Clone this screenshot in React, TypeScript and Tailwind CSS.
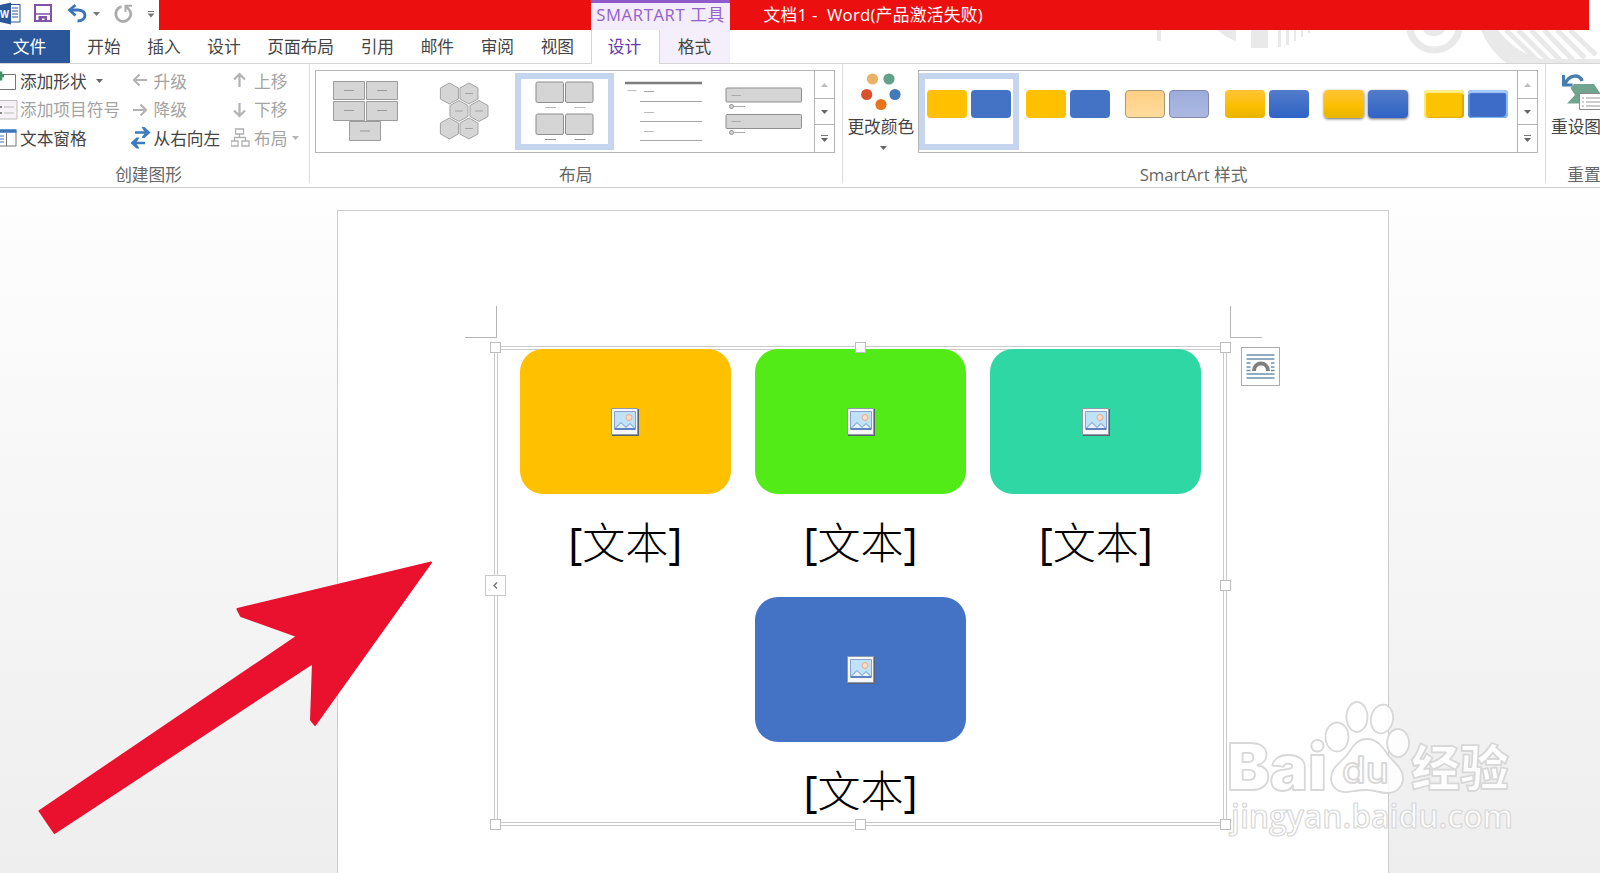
import type { ReactNode } from 'react';

const tabs = ['开始', '插入', '设计', '页面布局', '引用', '邮件', '审阅', '视图'];

function Caret({ className = 'text-[#666]' }: { className?: string }) {
  return (
    <svg width="7" height="4" viewBox="0 0 7 4" className={className}>
      <path d="M0 0h7L3.500 4z" fill="currentColor" />
    </svg>
  );
}

function QuickAccess() {
  return (
    <svg width="159" height="30" viewBox="0 0 159 30" className="shrink-0">
      <rect x="8" y="4.500" width="12" height="17.500" fill="#fff" stroke="#2b579a" />
      <path d="M12 8h6M12 11h6M12 14h6M12 17h6" stroke="#2b579a" />
      <path d="M0 5l11-2.500v22L0 22z" fill="#2b579a" />
      <text x="0" y="18" fontSize="11" fontWeight="700" fill="#fff" fontFamily="Open Sans" textLength="9" lengthAdjust="spacingAndGlyphs">W</text>
      <path d="M35 5h16v16h-16z" fill="#fff" stroke="#8151ac" strokeWidth="2" />
      <path d="M35 14h16" stroke="#8151ac" strokeWidth="1.500" />
      <path d="M38.500 16h8.500v5.500h-2.500v-3h-2.500v3h-3.500z" fill="#8151ac" />
      <path d="M70 10h8.500c9 .5 8.500 11-1 11" fill="none" stroke="#3b74b9" strokeWidth="3" />
      <path d="M75.500 5l-6 5 6 5.500" fill="none" stroke="#3b74b9" strokeWidth="2.800" />
      <path d="M93 12h7l-3.500 4z" fill="#777" />
      <path d="M121.500 6.600a7.500 7.500 0 1 0 8.500 4" fill="none" stroke="#acacac" strokeWidth="2.800" />
      <path d="M125.500 12V5.800h6.500" fill="none" stroke="#acacac" strokeWidth="2" />
      <path d="M126 6l4 5" stroke="#acacac" strokeWidth="2.500" />
      <path d="M148 11.500h6" stroke="#777" />
      <path d="M147.500 13.500h7l-3.500 4z" fill="#777" />
    </svg>
  );
}

function TitleBar() {
  return (
    <div className="flex h-[30px] w-full">
      <QuickAccess />
      <div className="w-[432px] bg-[#eb0f0f]" />
      <div className="w-[139px] border-t-[3px] border-[#8f5bcb] bg-[#f3ecfb] text-center leading-[24px] tracking-[0.600px] whitespace-nowrap text-[#9461c9]">
        SMARTART 工具
      </div>
      <div className="w-[859px] bg-[#eb0f0f] pl-[33.500px] leading-[30px] tracking-[0.300px] whitespace-pre text-white">
        {'文档1 -  Word(产品激活失败)'}
      </div>
    </div>
  );
}

function TabBar() {
  return (
    <div className="relative flex h-[34px] border-b border-[#d5d5d5] leading-[33px] text-[#444]">
      <svg className="absolute top-0 left-[1150px]" width="450" height="33" viewBox="0 0 450 33">
        <g fill="#e9e9e9">
          <path d="M7 0h4v11H7zM68 0h18v11Q74 7 68 0zM101 0h17v18h-17zM128 0h3v17h-3zM136 0h3v15h-3zM144 0h2v11h-2zM151 0h2v7h-2zM158 0h2v3h-2z" />
          <path d="M273 0h22q-3 6-11 6T273 0z" />
          <path d="M331 0h17q20 25 44 29l58 0v4H356Q339 20 331 0z" />
        </g>
        <path d="M260 0a25 25 0 0 0 49 0" fill="none" stroke="#e9e9e9" strokeWidth="7" />
        <path d="M356 0l32 31M368 0l31 31M381 0l30 31M394 0l29 30M407 0l28 28M420 0l26 25" stroke="#e9e9e9" strokeWidth="5" />
      </svg>
      <div className="w-[70px] bg-[#2b579a] pr-[11px] text-center leading-[33px] text-white">文件</div>
      <div className="flex w-[520.500px] shrink-0 pl-[4px]">
        {tabs.map((tab) => (
          <div key={tab} className="shrink-0 px-[13.320px]">{tab}</div>
        ))}
      </div>
      <div className="relative z-10 h-[34px] w-[69px] shrink-0 border-x border-[#d5d5d5] bg-white pr-[1px] text-center text-[#6a35b0]">
        设计
      </div>
      <div className="w-[70px] bg-[#f5effc] text-center">格式</div>
    </div>
  );
}

function Group({ label, className, children }: { label: string; className: string; children: ReactNode }) {
  return (
    <div className={`flex shrink-0 flex-col ${className}`}>
      <div className="h-[98px] shrink-0">{children}</div>
      <div className="text-center leading-[25px] whitespace-nowrap text-[#666]">{label}</div>
    </div>
  );
}

function Command({ icon, label, muted, caret }: { icon: ReactNode; label: string; muted?: boolean; caret?: boolean }) {
  return (
    <div className={muted ? 'flex h-[28.500px] items-center text-[#a3a3a3]' : 'flex h-[28.500px] items-center text-[#444]'}>
      {icon}
      <span className="whitespace-nowrap">{label}</span>
      {caret && <Caret className={muted ? 'ml-[5px] text-[#b5b5b5]' : 'ml-[9px] text-[#666]'} />}
    </div>
  );
}

function Arrow({ d }: { d: string }) {
  return (
    <svg width="23" height="22" viewBox="0 0 23 22" className="shrink-0">
      <path d={d} fill="none" stroke="#b3b3b3" strokeWidth="2.200" />
    </svg>
  );
}

function CreateGraphic() {
  return (
    <div className="flex pt-[3px]">
      <div className="w-[130.500px] shrink-0">
        <Command
          label="添加形状"
          caret
          icon={
            <svg width="20" height="24" viewBox="0 0 20 24" className="shrink-0">
              <path d="M-1 5.500h16.500v15H-1" fill="#fff" stroke="#777" />
              <path d="M-3 7h7M1 2.500v9" stroke="#3f9268" strokeWidth="2.500" />
            </svg>
          }
        />
        <Command
          label="添加项目符号"
          muted
          icon={
            <svg width="20" height="24" viewBox="0 0 20 24" className="shrink-0">
              <path d="M-1 2.500h18v18.500H-1" fill="#f6f1f6" stroke="#bbb" />
              <path d="M0 9h2M0 15h2" stroke="#888" strokeWidth="2" />
              <path d="M4 9h10M4 15h10" stroke="#bbb" />
            </svg>
          }
        />
        <Command
          label="文本窗格"
          icon={
            <svg width="20" height="24" viewBox="0 0 20 24" className="shrink-0">
              <path d="M-1 4.500h17v15.500H-1z" fill="#fff" stroke="#777" />
              <path d="M0 5h16.500" stroke="#3b74b9" strokeWidth="3.500" />
              <path d="M6.500 7v13" stroke="#777" />
              <path d="M0 10h4M0 13h4M0 16h4" stroke="#3b74b9" />
            </svg>
          }
        />
      </div>
      <div className="w-[100.500px] shrink-0">
        <Command muted label="升级" icon={<Arrow d="M16 10H3M8.500 4.500L3 10l5.500 5.500" />} />
        <Command muted label="降级" icon={<Arrow d="M2 11h13M9.500 5.500L15 11l-5.500 5.500" />} />
        <Command
          label="从右向左"
          icon={
            <svg width="23" height="24" viewBox="0 0 23 24" className="shrink-0">
              <path d="M4 6.500h11M2 17h12" fill="none" stroke="#3b7bbf" strokeWidth="2.600" />
              <path d="M10.500 1h3l6 5.500-6 5.500h-3l3.500-5.500zM8.500 11.500h-3l-6 5.500 6 5.500h3L5 17z" fill="#3b7bbf" />
            </svg>
          }
        />
      </div>
      <div className="shrink-0">
        <Command muted label="上移" icon={<Arrow d="M8.500 17V4M3 9.500L8.500 4l5.500 5.500" />} />
        <Command muted label="下移" icon={<Arrow d="M8.500 4v13M3 11.500L8.500 17l5.500-5.500" />} />
        <Command
          muted
          caret
          label="布局"
          icon={
            <svg width="23" height="22" viewBox="0 0 23 22" className="shrink-0">
              <path d="M4.500 2h8v5h-8zM0 14h7v5H0zM11 14h7v5h-7zM8.500 7v4M3.500 14v-3.500h11V14" fill="none" stroke="#b0b0b0" strokeWidth="1.300" />
            </svg>
          }
        />
      </div>
    </div>
  );
}

function GalleryScroll() {
  return (
    <div className="flex w-[20px] shrink-0 flex-col border-l border-[#b5b5b5]">
      <div className="flex h-[28px] items-center justify-center border-b border-[#b5b5b5]">
        <Caret className="rotate-180 text-[#bdbdbd]" />
      </div>
      <div className="flex h-[26px] items-center justify-center border-b border-[#b5b5b5]">
        <Caret />
      </div>
      <div className="flex flex-1 flex-col items-center justify-center gap-[2px]">
        <div className="h-px w-[7px] bg-[#777]" />
        <Caret />
      </div>
    </div>
  );
}

const hexes = [[34.4, 22.5], [54, 22.5], [44, 40], [64, 40], [34.4, 57.5], [54, 57.5]];

const layouts = [
  <g fill="#d5d5d5" stroke="#9b9b9b">
    <path d="M17.500 10.500h31v18h-31zM50.500 10.500h31v18h-31zM17.500 30.500h31v19h-31zM50.500 30.500h31v19h-31zM33.500 50.500h31v19h-31z" />
    <path d="M28 19.500h10M61 19.500h10M28 39.500h10M61 39.500h10M44 60h10" />
  </g>,
  <g fill="#d5d5d5" stroke="#a3a3a3">
    {hexes.map(([x, y]) => (
      <path key={`${x}-${y}`} transform={`translate(${x} ${y})`} d="M0-10.500l9 5v11l-9 5-9-5v-11z" />
    ))}
    <path d="M50 22.500h8M40 40h8M60 40h8M50 57.500h8" />
  </g>,
  <g fill="#d5d5d5" stroke="#8e8e8e">
    <rect x="21" y="11" width="27.500" height="20.500" rx="1.500" />
    <rect x="50.500" y="11" width="27.500" height="20.500" rx="1.500" />
    <rect x="21" y="43" width="27.500" height="20.500" rx="1.500" />
    <rect x="50.500" y="43" width="27.500" height="20.500" rx="1.500" />
    <path d="M30 36.500h11M59.500 36.500h11" stroke="#bbb" />
    <path d="M30 68.500h11M59.500 68.500h11" />
  </g>,
  <g stroke="#a6a6a6">
    <path d="M11 12h77" stroke="#7d7d7d" strokeWidth="2.500" />
    <path d="M30 20.500h10M26 30.500h62M26 50.500h62M26 69.500h62" />
    <path d="M13.500 19.500h9M30 41.500h10M30 60.500h10" stroke="#bbb" />
  </g>,
  <g fill="#d5d5d5" stroke="#8e8e8e">
    <rect x="12" y="17" width="75.500" height="14" rx="1" />
    <rect x="12" y="43.500" width="75.500" height="14" rx="1" />
    <path d="M17.500 24.500h9.500M17.500 50.500h9.500M20 35.500h11M20 61.500h11" stroke="#aaa" />
    <circle cx="17.500" cy="35.500" r="2" />
    <circle cx="17.500" cy="61.500" r="2" />
  </g>,
];

function LayoutGallery() {
  return (
    <div className="flex pt-[6px] pl-[4.500px]">
      <div className="flex h-[83px] w-[520px] border border-[#b5b5b5]">
        {layouts.map((drawing, i) => (
          <div key={i} className="relative h-[80px] w-[99.600px] shrink-0">
            {i === 2 && <div className="absolute inset-x-0 top-[1.500px] h-[77px] border-[6px] border-[#c5d5ee]" />}
            <svg width="99.600" height="80" viewBox="0 0 99.600 80" className="relative">{drawing}</svg>
          </div>
        ))}
        <div className="flex-1" />
        <GalleryScroll />
      </div>
    </div>
  );
}

const styles = [
  ['bg-[#ffc000]', 'bg-[#4472c4]'],
  ['bg-[#ffc000]', 'bg-[#4472c4]'],
  ['border border-[#a3987c] bg-linear-to-b from-[#ffcf83] to-[#ffdc9c]', 'border border-[#8088ad] bg-linear-to-b from-[#9bacdb] to-[#adb8e2]'],
  ['bg-linear-to-b from-[#ffc332] via-[#fcc000] to-[#e9b500]', 'bg-linear-to-b from-[#537bc9] to-[#2f63c6]'],
  ['bg-linear-to-b from-[#ffc332] via-[#fcc000] to-[#e9b500] shadow-[0_1px_3px_#666]', 'bg-linear-to-b from-[#537bc9] to-[#2f63c6] shadow-[0_1px_3px_#666]'],
  ['bg-[#fcc400] shadow-[inset_0_4px_1px_-1px_#fff08a,inset_2px_0_1px_#ffe97a,inset_-2px_-1px_1px_#d8a900]', 'bg-[#3d6cc8] shadow-[inset_0_4px_1px_-1px_#a8cafa,inset_2px_0_1px_#5b8fe0,inset_-2px_-1px_1px_#8cc0f5]'],
];

function StyleGallery() {
  return (
    <div className="mt-[6px] flex h-[83px] w-[620px] border border-[#b5b5b5]">
      {styles.map(([left, right], i) => (
        <div key={i} className="relative h-[80px] w-[99.400px] shrink-0 pt-[19px]">
          {i === 0 && <div className="absolute top-[1.500px] right-[-1px] left-0 h-[77px] border-[6px] border-[#c5d5ee]" />}
          <div className="relative flex justify-center gap-[4px]">
            <div className={`h-[28px] w-[40px] rounded-[4px] ${left}`} />
            <div className={`h-[28px] w-[40px] rounded-[4px] ${right}`} />
          </div>
        </div>
      ))}
      <div className="flex-1" />
      <GalleryScroll />
    </div>
  );
}

function Ribbon() {
  return (
    <div className="flex h-[124px] overflow-hidden border-b border-[#cfcfcf] bg-white pb-[4px]">
      <Group label="创建图形" className="w-[310px] border-r border-[#dcdcdc] pr-[12px]">
        <CreateGraphic />
      </Group>
      <Group label="布局" className="w-[532.500px] border-r border-[#dcdcdc]">
        <LayoutGallery />
      </Group>
      <Group label="SmartArt 样式" className="w-[703px] border-r border-[#dcdcdc]">
        <div className="flex">
          <div className="flex w-[75.500px] shrink-0 flex-col items-center text-[#444]">
            <svg width="60" height="50" viewBox="0 0 60 50" className="shrink-0">
              <circle cx="22.500" cy="15" r="5.600" fill="#ecb164" />
              <circle cx="39" cy="15" r="5.600" fill="#63a18a" />
              <circle cx="16.700" cy="30.500" r="5.600" fill="#d9512f" />
              <circle cx="45" cy="30.500" r="5.600" fill="#437ab8" />
              <circle cx="31" cy="40.500" r="5.600" fill="#e5741d" />
            </svg>
            <div className="pl-px leading-[26px] whitespace-nowrap">更改颜色</div>
            <Caret className="mt-[6px] ml-[6px] text-[#666]" />
          </div>
          <StyleGallery />
        </div>
      </Group>
      <Group label="重置" className="w-[77px]">
        <div className="pl-[5.500px] text-[#444]">
          <svg width="60" height="50" viewBox="0 0 60 50">
            <path d="M23 20h20l6 9v10.500H16l8-8.500-4.500-7z" fill="#70a48f" />
            <path d="M28.500 29.500h25v16h-25z" fill="#fff" stroke="#888" />
            <path d="M31 34h2M31 38h2M31 42h2M35 34h15M35 38h15M35 42h15" stroke="#999" />
            <path d="M14 20c4-10 15-10 17-3" fill="none" stroke="#477ead" strokeWidth="3.500" />
            <path d="M12.500 11v10h9" fill="none" stroke="#477ead" strokeWidth="3" />
          </svg>
          <div className="leading-[26px] whitespace-nowrap">重设图形</div>
        </div>
      </Group>
    </div>
  );
}

function PictureIcon() {
  return (
    <svg width="28" height="28" viewBox="0 0 28 28">
      <path d="M1 1h27v27H1z" fill="#5c6270" />
      <path d="M.5 .5h26v26H.5z" fill="#f7f8fb" stroke="#9099a8" />
      <path d="M3.500 3.500h21v18h-21z" fill="#bfe2f8" stroke="#8ba1cb" />
      <circle cx="18" cy="9.500" r="3" fill="#fbdcc9" stroke="#e8a98b" />
      <path d="M4 20.500l6-6 5 5 4-4 5 5z" fill="#e6f1fd" stroke="#6a90cb" />
      <path d="M4 21.200h20" stroke="#4d70b0" />
    </svg>
  );
}

function PictureCard({ color }: { color: string }) {
  return (
    <div className="flex w-[211px] shrink-0 flex-col items-center">
      <div className={`flex h-[145px] w-full items-center justify-center rounded-[23px] ${color}`}>
        <PictureIcon />
      </div>
      <div className="flex h-[103px] items-center pb-[6px] text-[43px] leading-none font-light text-black">
        <span className="font-normal">[</span>
        文本
        <span className="font-normal">]</span>
      </div>
    </div>
  );
}

const handles = [
  'left-[-5px] top-[-5px]',
  'left-[360px] top-[-5px]',
  'right-[-5px] top-[-5px]',
  'right-[-5px] top-[233px]',
  'left-[-5px] bottom-[-5px]',
  'left-[360px] bottom-[-5px]',
  'right-[-5px] bottom-[-5px]',
];

function SmartArt() {
  return (
    <div className="relative h-[480px] w-[733px] border border-[#cacaca] p-[2px]">
      <div className="h-full border border-[#cacaca]">
        <div className="-mt-px flex flex-wrap justify-center gap-x-[24.300px]">
          <PictureCard color="bg-[#ffc000]" />
          <PictureCard color="bg-[#52eb17]" />
          <PictureCard color="bg-[#2ed7a3]" />
          <PictureCard color="bg-[#4472c4]" />
        </div>
      </div>
      {handles.map((pos) => (
        <div key={pos} className={`absolute h-[11px] w-[11px] border border-[#bdbdbd] bg-white ${pos}`} />
      ))}
      <div className="absolute top-[228px] left-[-10px] flex h-[21px] w-[21px] items-center justify-center border border-[#c9c9c9] bg-white">
        <svg width="5" height="7" viewBox="0 0 5 7">
          <path d="M4 .5l-3 3 3 3" fill="none" stroke="#777" strokeWidth="1.500" />
        </svg>
      </div>
      {/* layout options button */}
      <div className="absolute top-0 left-[746px] h-[39px] w-[39px] border border-[#ababab] bg-white">
        <svg width="37" height="37" viewBox="0 0 37 37">
          <path d="M4.500 7h28M4.500 11h28M4.500 15h4M29 15h3.500M4.500 19h4M29 19h3.500M4.500 22.500h4M29 22.500h3.500M4.500 26h28M4.500 30h28" stroke="#6d91ac" strokeWidth="1.300" />
          <path d="M12 23c0-10 14-10 14 0" fill="none" stroke="#808080" strokeWidth="4" />
        </svg>
      </div>
    </div>
  );
}

function Watermark() {
  return (
    <svg className="absolute top-[690px] left-[1220px]" width="310" height="160" viewBox="1220 690 310 160">
      <g fill="#fff" fillOpacity="0.850" stroke="#d8d8d8" strokeWidth="1.800" strokeLinejoin="round" fontFamily="Inter, Noto Sans CJK SC, sans-serif">
        <text x="1227" y="790" fontSize="64" fontWeight="900" textLength="100" lengthAdjust="spacingAndGlyphs">Bai</text>
        <ellipse cx="1337" cy="737" rx="11.500" ry="14.500" />
        <ellipse cx="1357" cy="717" rx="10.500" ry="15" />
        <ellipse cx="1382" cy="719" rx="11" ry="14.500" transform="rotate(10 1382 719)" />
        <ellipse cx="1398" cy="743" rx="11" ry="14" />
        <path d="M1367 739c-10 0-14 7-20 16-7 8-16 13-16 23 0 9 7 15 17 14 7-1 12-2 19-2s13 3 20 3c9 0 16-6 16-15 0-10-9-15-15-23-6-9-11-16-21-16z" />
        <text x="1342" y="783" fontSize="37" fontWeight="500" textLength="47" lengthAdjust="spacingAndGlyphs">du</text>
        <text x="1411" y="786" fontSize="49" fontWeight="900" textLength="98" lengthAdjust="spacingAndGlyphs">经验</text>
        <text x="1231" y="828" fontSize="32" fontWeight="600" strokeWidth="1.200" fontFamily="Open Sans" textLength="282" lengthAdjust="spacingAndGlyphs">jingyan.baidu.com</text>
      </g>
    </svg>
  );
}

export default function App() {
  return (
    <div className="relative flex h-[873px] w-[1600px] flex-col overflow-hidden bg-white font-['Open_Sans','Noto_Sans_CJK_SC',sans-serif] text-[16.700px]">
      <TitleBar />
      <TabBar />
      <Ribbon />
      <div className="flex-1 overflow-hidden bg-linear-to-b from-[#fefefe] to-[#eeeeee] pt-[22px] pl-[337px]">
        <div className="h-[700px] w-[1052px] border border-[#cdcdcd] bg-white pt-[95px]">
          <div className="ml-[127px] flex w-[797px] justify-between">
            <div className="h-[32px] w-[32px] border-r border-b border-[#b5b5b5]" />
            <div className="h-[32px] w-[32px] border-b border-l border-[#b5b5b5]" />
          </div>
          <div className="mt-[8px] ml-[156px]">
            <SmartArt />
          </div>
        </div>
      </div>
      <Watermark />
      <svg className="absolute top-[540px] left-0" width="480" height="320" viewBox="0 540 480 320">
        <path d="M431 562.500L237.500 609l3.500 7 56.500 20.200L39.500 811l15 22L313 662.800 311 720l4 5z" fill="#ea112e" stroke="#ea112e" strokeWidth="2" strokeLinejoin="round" />
      </svg>
    </div>
  );
}
